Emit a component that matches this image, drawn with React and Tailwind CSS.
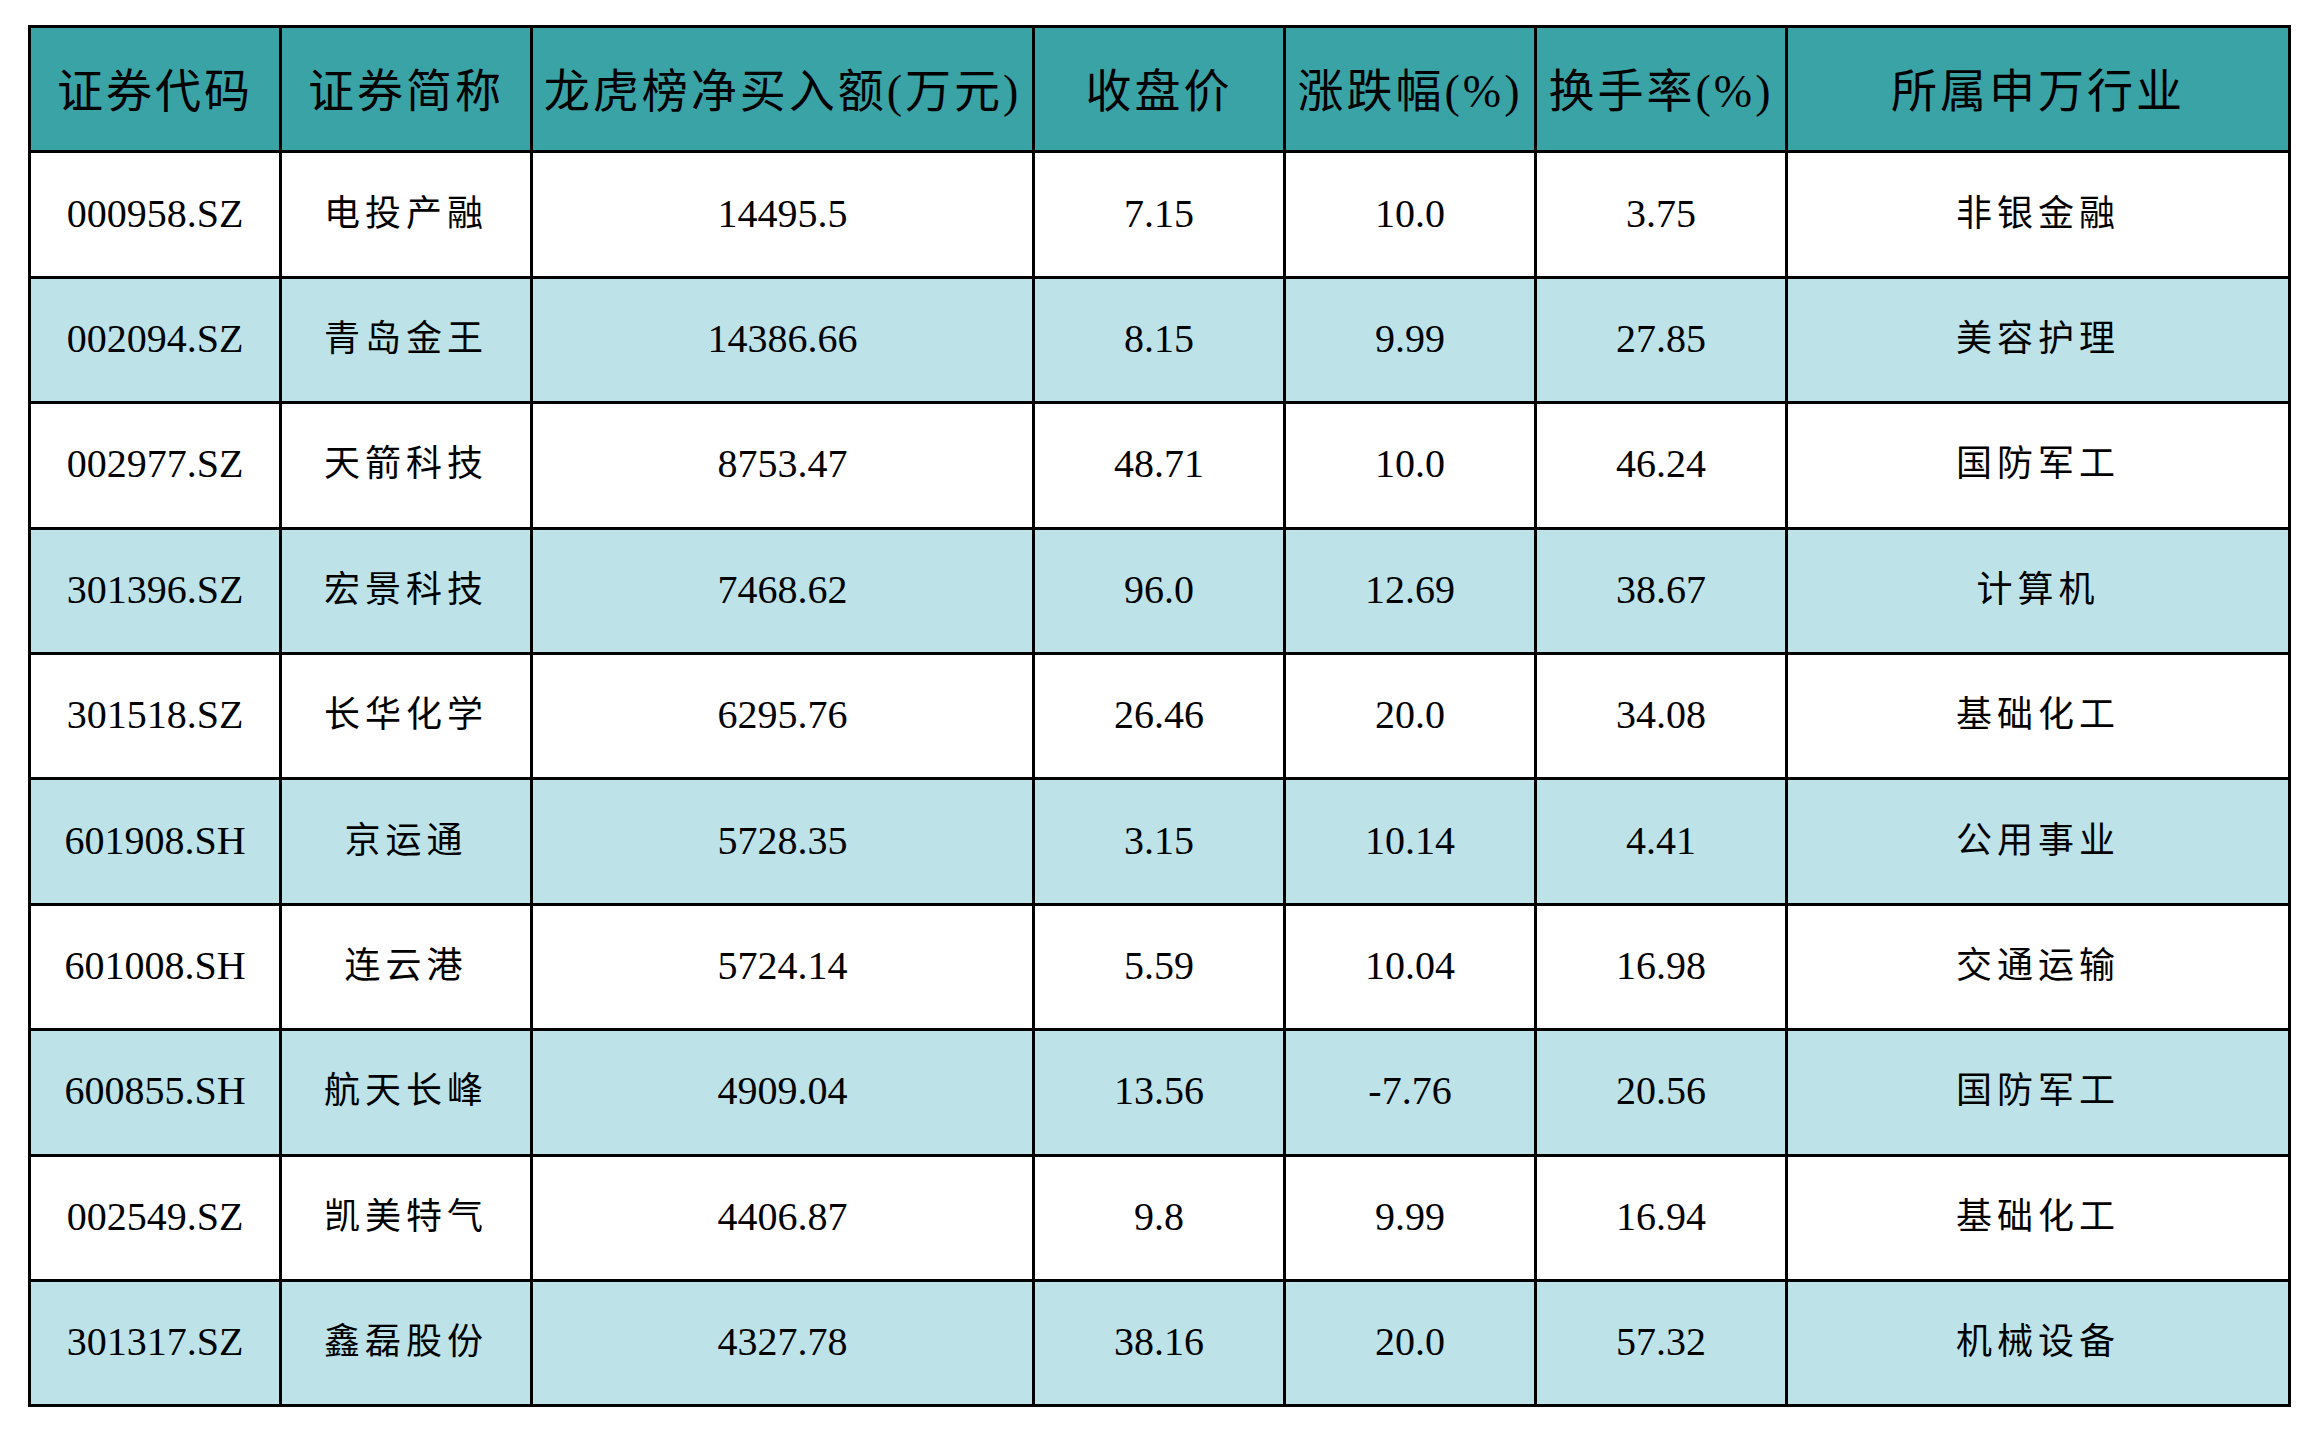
import React from "react";

const headers = ["证券代码", "证券简称", "龙虎榜净买入额(万元)", "收盘价", "涨跌幅(%)", "换手率(%)", "所属申万行业"];

const rows = [
  ["000958.SZ", "电投产融", "14495.5", "7.15", "10.0", "3.75", "非银金融"],
  ["002094.SZ", "青岛金王", "14386.66", "8.15", "9.99", "27.85", "美容护理"],
  ["002977.SZ", "天箭科技", "8753.47", "48.71", "10.0", "46.24", "国防军工"],
  ["301396.SZ", "宏景科技", "7468.62", "96.0", "12.69", "38.67", "计算机"],
  ["301518.SZ", "长华化学", "6295.76", "26.46", "20.0", "34.08", "基础化工"],
  ["601908.SH", "京运通", "5728.35", "3.15", "10.14", "4.41", "公用事业"],
  ["601008.SH", "连云港", "5724.14", "5.59", "10.04", "16.98", "交通运输"],
  ["600855.SH", "航天长峰", "4909.04", "13.56", "-7.76", "20.56", "国防军工"],
  ["002549.SZ", "凯美特气", "4406.87", "9.8", "9.99", "16.94", "基础化工"],
  ["301317.SZ", "鑫磊股份", "4327.78", "38.16", "20.0", "57.32", "机械设备"],
];

const cjk = /[\u4e00-\u9fff]/;

export default function App() {
  return (
    <div className="min-h-screen bg-white pl-[28px] pt-[25px] font-['Liberation_Serif','Noto_Sans_CJK_SC',serif] text-black">
      <div className="grid w-max grid-cols-[251px_251px_502px_251px_251px_251px_503px] auto-rows-[125.4px] border-l-[3px] border-t-[3px] border-black">
        {headers.map((h) => (
          <div
            key={h}
            className="flex items-center justify-center border-b-[3px] border-r-[3px] border-black bg-[#3aa3a6] pt-1 text-[46px] tracking-[3px]"
          >
            {h}
          </div>
        ))}
        {rows.map((r, i) =>
          r.map((c, j) => (
            <div
              key={i + "-" + j}
              className={
                "flex items-center justify-center border-b-[3px] border-r-[3px] border-black pb-[2px] " +
                (i % 2 === 1 ? "bg-[#bde3e9] " : "bg-white ") +
                (cjk.test(c) ? "text-[36px] tracking-[5px]" : "text-[40px]")
              }
            >
              {c}
            </div>
          ))
        )}
      </div>
    </div>
  );
}
